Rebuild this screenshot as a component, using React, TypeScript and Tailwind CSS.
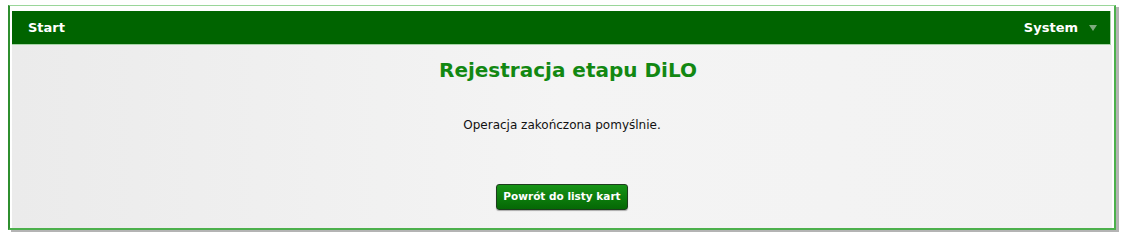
export default function App() {
  return (
    <div className="w-[1130px] h-[238px] bg-white pt-[5px] pl-[8px] font-['DejaVu_Sans',Verdana,sans-serif]">
      <div className="w-[1108px] h-[225px] flex flex-col border-t border-t-[#9ad69a] border-l-2 border-l-[#2f8f2f] border-r-2 border-r-[#4cb04c] border-b-2 border-b-[#4cb04c] shadow-[3px_2px_0_#b4b4b4] pt-[5px] px-[2px] bg-white">
        {/* Header */}
        <div className="h-[34px] mr-[1px] flex items-center justify-between bg-[#006400] border-r border-b border-[#a6d4a6] pl-[16px] pr-[13px] text-white text-[13px] font-bold">
          <span>Start</span>
          <div className="flex items-center gap-[11px]">
            <span>System</span>
            <svg width="8" height="6" viewBox="0 0 8 6" className="mt-[1px]">
              <polygon points="0,0 8,0 4,6" fill="#7fab7f" />
            </svg>
          </div>
        </div>

        {/* Body */}
        <div className="flex-1 flex flex-col items-center bg-gradient-to-r from-[#ebebeb] via-[#f4f4f4] to-[#f2f2f2] pt-[12px]">
          <h1 className="ml-[12px] text-[20px] leading-[26px] font-bold text-[#128812]">
            Rejestracja etapu DiLO
          </h1>
          <p className="mt-[34px] text-[12px] leading-[16px] text-[#111]">
            Operacja zakończona pomyślnie.
          </p>
          <button className="mt-[51px] h-[26px] px-[6px] rounded-[3px] border border-[#1d3d1d] bg-gradient-to-b from-[#169416] to-[#056805] text-white text-[10.5px] font-bold shadow-[0_1px_1px_rgba(0,0,0,0.3)]">
            Powrót do listy kart
          </button>
        </div>
      </div>
    </div>
  )
}
